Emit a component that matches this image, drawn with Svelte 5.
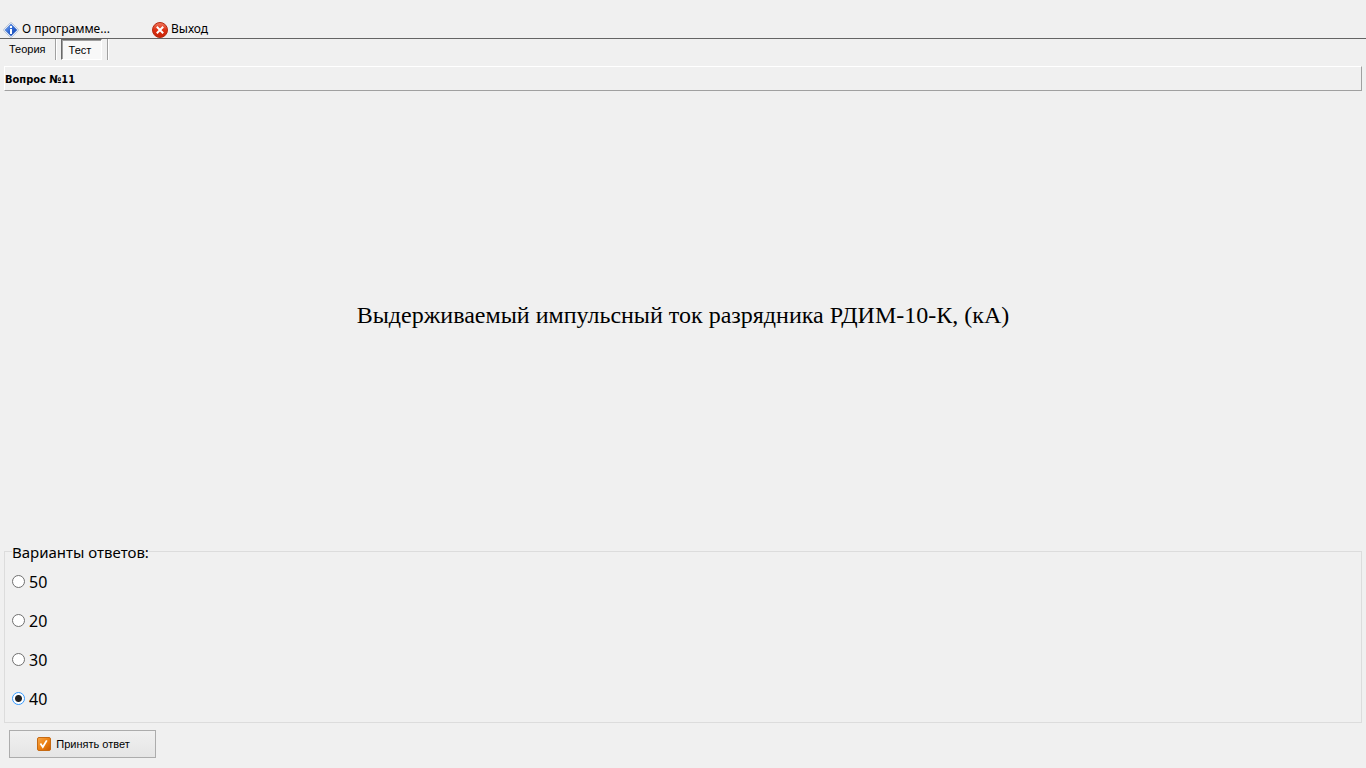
<script lang="ts">
	const questionNumber = 11;
	const question = 'Выдерживаемый импульсный ток разрядника РДИМ-10-К, (кА)';
	const answers = ['50', '20', '30', '40'];

	let activeTab = $state('test');
	let selected = $state('40');
</script>

<svelte:head>
	<title>Тест</title>
</svelte:head>

<div class="window">
	<nav class="menu">
		<button type="button" class="menu-item about">
			<svg width="16" height="16" viewBox="0 0 16 16" aria-hidden="true">
				<defs>
					<linearGradient id="info" x1="0" y1="0" x2="1" y2="1">
						<stop offset="0" stop-color="#8db6f5" />
						<stop offset="0.5" stop-color="#2c65d2" />
						<stop offset="1" stop-color="#1742a5" />
					</linearGradient>
				</defs>
				<path d="M7 1Q8 0 9 1L15 7Q16 8 15 9L9 15Q8 16 7 15L1 9Q0 8 1 7Z" fill="#dfe8f6" stroke="#a9b7cd" stroke-width=".7" />
				<path d="M8 2 14 8 8 14 2 8Z" fill="url(#info)" stroke="#3f70c9" stroke-width=".6" stroke-linejoin="round" />
				<path d="M7 4h2v2H7zM7 7h2v5H7z" fill="#fff" />
			</svg>
			О программе...
		</button>
		<button type="button" class="menu-item">
			<svg width="16" height="16" viewBox="0 0 16 16" aria-hidden="true">
				<defs>
					<linearGradient id="exit" x1="0" y1="0" x2="0" y2="1">
						<stop offset="0" stop-color="#f27a60" />
						<stop offset="0.5" stop-color="#dc2f12" />
						<stop offset="1" stop-color="#c92306" />
					</linearGradient>
				</defs>
				<circle cx="8" cy="8" r="7.5" fill="url(#exit)" stroke="#b52a12" />
				<path d="m4.8 4.8 6.4 6.4m0-6.4-6.4 6.4" stroke="#fff" stroke-width="2" />
			</svg>
			Выход
		</button>
	</nav>

	<div class="tabs" role="tablist">
		<div class="tab-slot">
			<button type="button" role="tab" class="tab" class:active={activeTab === 'theory'} aria-selected={activeTab === 'theory'} onclick={() => (activeTab = 'theory')}>Теория</button>
		</div>
		<div class="tab-slot">
			<button type="button" role="tab" class="tab" class:active={activeTab === 'test'} aria-selected={activeTab === 'test'} onclick={() => (activeTab = 'test')}>Тест</button>
		</div>
	</div>

	<h1 class="caption">Вопрос №{questionNumber}</h1>

	<main class="question">{question}</main>

	<fieldset class="answers">
		<legend>Варианты ответов:</legend>
		{#each answers as answer}
			<label class="answer">
				<input type="radio" name="answer" value={answer} bind:group={selected} />
				{answer}
			</label>
		{/each}
	</fieldset>

	<button type="button" class="submit">
		<svg width="14" height="14" viewBox="0 0 14 14" aria-hidden="true">
			<defs>
				<linearGradient id="accept" x1="0" y1="0" x2="1" y2="1">
					<stop offset="0" stop-color="#f5a74c" />
					<stop offset="0.5" stop-color="#ee8212" />
					<stop offset="1" stop-color="#c95a00" />
				</linearGradient>
			</defs>
			<rect x=".5" y=".5" width="13" height="13" rx="1.5" fill="url(#accept)" stroke="#c66a13" />
			<path d="m3.4 6.6 2.4 3.4 4-6.6" fill="none" stroke="#fff" stroke-width="1.8" />
		</svg>
		Принять ответ
	</button>
</div>

<style>
	:global(body) {
		margin: 0;
		background: #f0f0f0;
	}

	.window {
		display: flex;
		flex-direction: column;
		min-height: 100vh;
		box-sizing: border-box;
		padding-bottom: 10px;
		color: #000;
		font-family: 'Liberation Sans', sans-serif;
		font-size: 11px;
	}

	button {
		margin: 0;
		color: inherit;
		font: inherit;
	}

	.menu {
		display: flex;
		padding: 20px 3px 0;
		border-bottom: 1px solid #646464;
	}

	.menu-item {
		display: flex;
		align-items: center;
		gap: 3px;
		height: 18px;
		padding: 0;
		border: 0;
		background: none;
		font-family: 'Noto Sans', sans-serif;
		font-size: 12px;
		line-height: 16px;
	}

	.menu-item svg {
		margin-top: 2px;
	}

	.about {
		width: 149px;
	}

	.tabs {
		display: flex;
	}

	.tab-slot {
		display: flex;
		height: 21px;
		box-sizing: border-box;
		padding: 0 5px 0 4px;
		border-right: 1px solid #a0a0a0;
		box-shadow: 1px 0 #fff;
	}

	.tab-slot + .tab-slot {
		padding-left: 5px;
	}

	.tab {
		padding: 0 3px 2px 4px;
		border: 1px solid transparent;
		background: none;
	}

	.tab.active {
		padding: 0 10px 0 7px;
		border-color: #696969 #fff #fff #696969;
		background: #f8f8f8;
		box-shadow: inset 1px 1px #a0a0a0;
	}

	.caption {
		margin: 6px 4px 0;
		padding-top: 2px;
		border: 1px solid;
		border-color: #fff #a0a0a0 #a0a0a0 #fff;
		font-family: 'DejaVu Sans Condensed', 'DejaVu Sans', sans-serif;
		font-size: 11px;
		line-height: 21px;
		font-weight: 700;
	}

	.question {
		display: flex;
		flex: 1;
		align-items: center;
		justify-content: center;
		font-family: 'Liberation Serif', serif;
		font-size: 24px;
		text-align: center;
	}

	.answers {
		display: flex;
		flex-direction: column;
		margin: 0 4px;
		padding: 0 7px 4px;
		border: 1px solid #dcdcdc;
		font-family: 'Noto Sans', sans-serif;
		font-size: 16px;
	}

	.answers legend {
		padding: 2px 0 0;
		font-size: 15px;
		line-height: 20px;
	}

	.answer {
		display: flex;
		align-items: center;
		gap: 4px;
		height: 39px;
	}

	.answer input {
		appearance: none;
		width: 13px;
		height: 13px;
		margin: 0;
		border: 1px solid #707070;
		border-radius: 50%;
		background: #fff;
	}

	.answer input:checked {
		border-color: #3399ff;
		background: radial-gradient(circle, #222 3px, #fff 4px);
	}

	.submit {
		display: flex;
		align-items: center;
		align-self: flex-start;
		justify-content: center;
		gap: 5px;
		width: 147px;
		height: 28px;
		margin: 7px 9px 0;
		padding: 0 0 0 2px;
		border: 1px solid #acacac;
		background: linear-gradient(#f0f0f0, #e5e5e5);
	}
</style>
